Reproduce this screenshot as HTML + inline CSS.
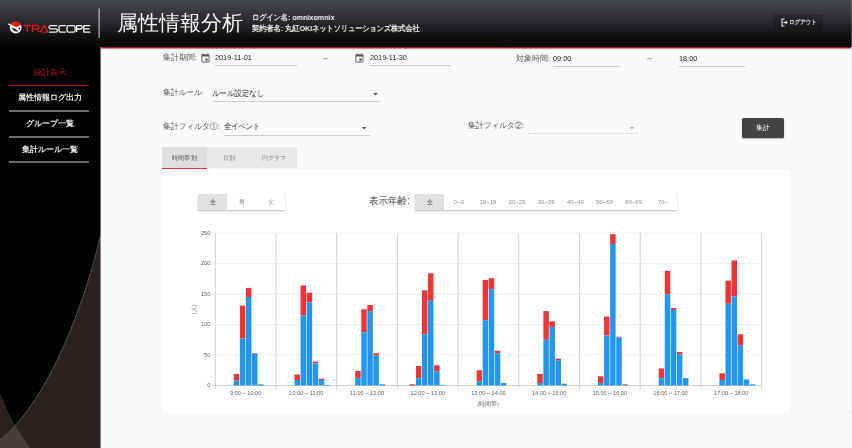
<!DOCTYPE html>
<html><head><meta charset="utf-8">
<style>
*{margin:0;padding:0;box-sizing:border-box}
html,body{width:852px;height:448px;overflow:hidden;background:#fafafa;font-family:"Liberation Sans",sans-serif}
.a{position:absolute;white-space:nowrap;will-change:transform}
#hdr{position:absolute;left:0;top:0;width:852px;height:47px;background:linear-gradient(#45484d 0%,#2a2b2f 45%,#0c0c0d 82%,#030303 100%)}
#redl{position:absolute;left:100px;top:47px;width:751px;height:1px;background:#a0181e}
#redl2{position:absolute;left:100px;top:48px;width:751px;height:1px;background:#ee7c84}
#side{position:absolute;left:0;top:47px;width:101px;height:401px;background:#000;overflow:hidden}
.menu{will-change:transform;position:absolute;left:0;width:100px;text-align:center;font-size:8px;line-height:10px;color:#e8e8e8;font-weight:bold}
.mline{position:absolute;left:9px;width:80px;height:2px;background:#6b6b6b}
.lbl{font-size:7.5px;line-height:10px;color:#555}
.val{font-size:7.3px;line-height:10px;color:#262626}
.valj{font-size:7px;line-height:10px;color:#3a3a3a;letter-spacing:0.3px}
.ul{position:absolute;height:1px;background:#cdcdcd}
.tab{position:absolute;top:147.4px;height:21px;width:45px;text-align:center;font-size:6.3px;letter-spacing:0.2px;line-height:21.5px;color:#7e7e7e;background:#e8e8e8;will-change:transform}
.tg{will-change:transform;position:absolute;height:16px;background:#fff;box-shadow:0 1px 1.5px rgba(0,0,0,.28)}
.tb{position:absolute;top:0;height:16px;width:29.15px;text-align:center;font-size:6px;line-height:16px;color:#909090}
.yl{font-size:5.6px;fill:#666;font-family:"Liberation Sans",sans-serif}
.xl{font-size:5.6px;fill:#666;font-family:"Liberation Sans",sans-serif}
</style></head><body>
<div id="hdr"></div>
<div id="redl"></div><div id="redl2"></div>

<!-- logo -->
<svg class="a" style="left:0;top:0" width="100" height="47" viewBox="0 0 100 47">
  <circle cx="15.7" cy="27.6" r="5.9" fill="#f4f4f4"/>
  <path d="M10.2 24.9 A6.05 6.05 0 0 1 21.3 24.8 L15.8 27.4 Z" fill="#e5141c"/>
  <path d="M8.2 23.9 L15.8 27.6" stroke="#f4f4f4" stroke-width="1.4" fill="none"/>
  <path d="M11.3 27.7 Q15 27.9 18.5 31.2 Q14.2 32.2 11.3 27.7 Z" fill="#121212"/>
  <circle cx="19.4" cy="28.5" r="0.95" fill="#121212"/>
  <g fill="none" stroke-width="1.35" stroke-linejoin="round">
  <path stroke="#e5141c" d="M23.9 25.5 H30.9 M27.4 25.5 V32.1 M32.5 32.1 V25.5 H37.3 Q38.9 25.5 38.9 27.2 Q38.9 28.9 37.3 28.9 H33 M36.6 28.9 L39.1 32.1 M40.4 32.1 L44.2 25.4 L48 32.1 H42.6"/>
  <path stroke="#f0f0f0" d="M57.3 25.6 H50.6 Q49 25.6 49 27.2 Q49 28.8 50.6 28.8 H55.8 Q57.4 28.8 57.4 30.45 Q57.4 32.1 55.8 32.1 H49 M65.8 25.6 H60.6 Q59 25.6 59 27.2 V30.5 Q59 32.1 60.6 32.1 H65.8 M68.6 25.6 H73.5 Q75.1 25.6 75.1 27.2 V30.5 Q75.1 32.1 73.5 32.1 H68.6 Q67 32.1 67 30.5 V27.2 Q67 25.6 68.6 25.6 Z M76.7 32.1 V25.6 H80.6 Q82.2 25.6 82.2 27.3 Q82.2 29 80.6 29 H76.7 M90.4 25.6 H83.8 V32.1 H90.4 M83.8 28.85 H89.6"/>
  </g>
  <rect x="98.6" y="8.5" width="1" height="29.5" fill="#d8d8d8"/>
</svg>
<div class="a" style="left:117px;top:10px;font-size:21px;line-height:26px;color:#f4f4f4">属性情報分析</div>
<div class="a" style="left:252px;top:12.3px;font-size:8px;line-height:11px;color:#f4f4f4;font-weight:bold;transform:scaleX(0.897);transform-origin:0 0">ログイン名: omnixomnix<br>契約者名: 丸紅OKIネットソリューションズ株式会社</div>
<!-- logout -->
<div class="a" style="left:773px;top:14.3px;width:50.4px;height:16.4px;background:rgba(0,0,0,.18);border-radius:1px"></div>
<svg class="a" style="left:780.8px;top:18px" width="8" height="9" viewBox="0 0 8 9">
  <path d="M3.5 1 H1 V8 H3.5" stroke="#eee" stroke-width="1.1" fill="none"/>
  <path d="M2.5 4.5 H5" stroke="#eee" stroke-width="1.2"/><path d="M4.6 2.6 L6.9 4.5 L4.6 6.4 Z" fill="#eee"/>
</svg>
<div class="a" style="left:789.3px;top:18px;font-size:6.2px;line-height:8px;color:#f0f0f0;font-weight:bold;transform:scaleX(0.92);transform-origin:0 0">ログアウト</div>

<!-- sidebar -->
<div id="side">
  <svg class="a" style="left:0;top:0" width="101" height="401" viewBox="0 47 101 401">
    <path d="M101 232 L100 237 C87.3 293.8 51 399.3 0 440 L0 448 L101 448 Z" fill="#2b2120"/>
    <path d="M0 393 Q13 427 30 448 L0 448 Z" fill="#2b2120"/>
    <path d="M15.5 425.6 Q22 437 30 448 L0 448 L0 440 Q8 433 15.5 425.6 Z" fill="#463e3d"/>
    <path d="M100 237 C87.3 293.8 51 399.3 0 440" stroke="#6a6464" stroke-width="0.7" fill="none"/>
  </svg>
  <div class="menu" style="top:20.5px;color:#cc1018;font-weight:normal">統計表示</div>
  <div class="mline" style="top:38px;height:1px;background:#b40e16"></div>
  <div class="menu" style="top:46px">属性情報ログ出力</div>
  <div class="mline" style="top:63px"></div>
  <div class="menu" style="top:71.8px">グループ一覧</div>
  <div class="mline" style="top:88.5px"></div>
  <div class="menu" style="top:98px">集計ルール一覧</div>
  <div class="mline" style="top:114px"></div>
</div>
<div class="a" style="left:100px;top:47px;width:1px;height:401px;background:rgba(250,250,250,.45)"></div>
<div class="a" style="left:851px;top:0;width:1px;height:47px;background:linear-gradient(#6a6c70,#3a3a3a)"></div><div class="a" style="left:851px;top:47px;width:1px;height:367px;background:#f0f0f0"></div>

<!-- form row 1 -->
<div class="a lbl" style="left:162.8px;top:53px">集計期間:</div>
<svg class="a" style="left:200.1px;top:52.6px" width="10.8" height="10.8" viewBox="0 0 24 24"><path d="M17 12h-5v5h5v-5zM16 1v2H8V1H6v2H5c-1.11 0-1.99.9-1.99 2L3 19c0 1.1.89 2 2 2h14c1.1 0 2-.9 2-2V5c0-1.1-.9-2-2-2h-1V1h-2zm3 18H5V8h14v11z" fill="#5c5c5c"/></svg>
<div class="a val" style="left:215px;top:53px">2019-11-01</div>
<div class="ul" style="left:215px;top:65px;width:82px"></div>
<svg class="a" style="left:323px;top:56.9px" width="5" height="3.4" viewBox="0 0 6 4"><path d="M0.4 2.7 Q1.6 0.9 3 2 Q4.4 3.1 5.6 1.3" stroke="#666" stroke-width="0.9" fill="none"/></svg>
<svg class="a" style="left:354.3px;top:52.6px" width="10.8" height="10.8" viewBox="0 0 24 24"><path d="M17 12h-5v5h5v-5zM16 1v2H8V1H6v2H5c-1.11 0-1.99.9-1.99 2L3 19c0 1.1.89 2 2 2h14c1.1 0 2-.9 2-2V5c0-1.1-.9-2-2-2h-1V1h-2zm3 18H5V8h14v11z" fill="#5c5c5c"/></svg>
<div class="a val" style="left:370px;top:53px">2019-11-30</div>
<div class="ul" style="left:370px;top:65px;width:81.3px"></div>
<div class="a lbl" style="left:515.5px;top:53.5px">対象時間:</div>
<div class="a val" style="left:553.4px;top:53.5px">09:00</div>
<div class="ul" style="left:553.4px;top:66px;width:66.6px"></div>
<svg class="a" style="left:646.8px;top:57.1px" width="5" height="3.4" viewBox="0 0 6 4"><path d="M0.4 2.7 Q1.6 0.9 3 2 Q4.4 3.1 5.6 1.3" stroke="#666" stroke-width="0.9" fill="none"/></svg>
<div class="a val" style="left:678.8px;top:53.5px">18:00</div>
<div class="ul" style="left:678.8px;top:66px;width:66.7px"></div>

<!-- form row 2 -->
<div class="a lbl" style="left:162.8px;top:88px;transform:scaleX(0.97);transform-origin:0 0">集計ルール:</div>
<div class="a val" style="left:212.2px;top:88.8px;font-size:8px;transform:scaleX(0.93);transform-origin:0 0">ルール設定なし</div>
<svg class="a" style="left:372.5px;top:92.5px" width="5" height="3" viewBox="0 0 5 3"><path d="M0 0 H5 L2.5 2.6 Z" fill="#555"/></svg>
<div class="ul" style="left:212.7px;top:100.5px;width:167.1px"></div>

<!-- form row 3 -->
<div class="a lbl" style="left:162.9px;top:121.7px;transform:scaleX(0.975);transform-origin:0 0">集計フィルタ①:</div>
<div class="a val" style="left:223.6px;top:122px;font-size:8px;transform:scaleX(0.9);transform-origin:0 0">全イベント</div>
<svg class="a" style="left:362.3px;top:126.8px" width="5" height="3" viewBox="0 0 5 3"><path d="M0 0 H4.4 L2.2 2.4 Z" fill="#555"/></svg>
<div class="ul" style="left:223.8px;top:134.8px;width:146.4px"></div>
<div class="a lbl" style="left:467.5px;top:121px;transform:scaleX(0.975);transform-origin:0 0">集計フィルタ②:</div>
<svg class="a" style="left:629.5px;top:126.5px" width="5" height="3" viewBox="0 0 5 3"><path d="M0 0 H4 L2 2.2 Z" fill="#aaa"/></svg>
<div class="ul" style="left:528px;top:132.5px;width:109.7px;background:none;border-top:1px dotted #cfcfcf"></div>
<div class="a" style="left:742.3px;top:118px;width:42px;height:20px;background:#434343;border-radius:1.5px;box-shadow:0 1px 1.5px rgba(0,0,0,.3);color:#fff;font-size:7px;line-height:20px;text-align:center">集計</div>

<!-- tabs -->
<div class="tab" style="left:162px;background:#dedede;color:#505050">時間帯別</div>
<div class="a" style="left:162px;top:167.6px;width:45px;height:1.2px;background:#e0303a"></div>
<div class="tab" style="left:207px">日別</div>
<div class="tab" style="left:252px;width:44.5px">円グラフ</div>

<!-- card -->
<div class="a" style="left:162px;top:168.5px;width:628px;height:245px;background:#fff;box-shadow:0 0 1px rgba(0,0,0,.12)"></div>

<!-- gender toggle -->
<div class="tg" style="left:198px;top:194px;width:87.4px">
  <div class="tb" style="left:0;background:#e0e0e0;color:#3a3a3a">全</div>
  <div class="tb" style="left:29.15px">男</div>
  <div class="tb" style="left:58.3px">女</div>
</div>
<div class="a" style="left:368.6px;top:195px;font-size:10px;line-height:12px;color:#3c3c3c;transform:scaleX(0.95);transform-origin:0 0">表示年齢:</div>
<div class="tg" style="left:415.4px;top:194.2px;width:262.3px">
  <div class="tb" style="left:0;background:#e0e0e0;color:#3a3a3a">全</div>
  <div class="tb" style="left:29.15px">0~9</div>
  <div class="tb" style="left:58.3px">10~19</div>
  <div class="tb" style="left:87.45px">20~29</div>
  <div class="tb" style="left:116.6px">30~39</div>
  <div class="tb" style="left:145.75px">40~49</div>
  <div class="tb" style="left:174.9px">50~59</div>
  <div class="tb" style="left:204.05px">60~69</div>
  <div class="tb" style="left:233.2px">70~</div>
</div>

<!-- chart -->
<svg class="a" style="left:0;top:0" width="852" height="448" viewBox="0 0 852 448">
<line x1="211.30" y1="385.50" x2="761.60" y2="385.50" stroke="#c9c9c9" stroke-width="0.8"/>
<text x="210.30" y="387.40" text-anchor="end" class="yl">0</text>
<line x1="211.30" y1="355.00" x2="761.60" y2="355.00" stroke="#ececec" stroke-width="0.8"/>
<text x="210.30" y="356.90" text-anchor="end" class="yl">50</text>
<line x1="211.30" y1="324.50" x2="761.60" y2="324.50" stroke="#ececec" stroke-width="0.8"/>
<text x="210.30" y="326.40" text-anchor="end" class="yl">100</text>
<line x1="211.30" y1="294.00" x2="761.60" y2="294.00" stroke="#ececec" stroke-width="0.8"/>
<text x="210.30" y="295.90" text-anchor="end" class="yl">150</text>
<line x1="211.30" y1="263.50" x2="761.60" y2="263.50" stroke="#ececec" stroke-width="0.8"/>
<text x="210.30" y="265.40" text-anchor="end" class="yl">200</text>
<line x1="211.30" y1="233.00" x2="761.60" y2="233.00" stroke="#ececec" stroke-width="0.8"/>
<text x="210.30" y="234.90" text-anchor="end" class="yl">250</text>
<line x1="215.30" y1="233.00" x2="215.30" y2="389.50" stroke="#cdcdcd" stroke-width="0.9"/>
<line x1="276.00" y1="233.00" x2="276.00" y2="389.50" stroke="#cdcdcd" stroke-width="0.9"/>
<line x1="336.70" y1="233.00" x2="336.70" y2="389.50" stroke="#cdcdcd" stroke-width="0.9"/>
<line x1="397.40" y1="233.00" x2="397.40" y2="389.50" stroke="#cdcdcd" stroke-width="0.9"/>
<line x1="458.10" y1="233.00" x2="458.10" y2="389.50" stroke="#cdcdcd" stroke-width="0.9"/>
<line x1="518.80" y1="233.00" x2="518.80" y2="389.50" stroke="#cdcdcd" stroke-width="0.9"/>
<line x1="579.50" y1="233.00" x2="579.50" y2="389.50" stroke="#cdcdcd" stroke-width="0.9"/>
<line x1="640.20" y1="233.00" x2="640.20" y2="389.50" stroke="#cdcdcd" stroke-width="0.9"/>
<line x1="700.90" y1="233.00" x2="700.90" y2="389.50" stroke="#cdcdcd" stroke-width="0.9"/>
<line x1="761.60" y1="233.00" x2="761.60" y2="389.50" stroke="#cdcdcd" stroke-width="0.9"/>
<text x="245.65" y="395.00" text-anchor="middle" class="xl">9:00 ~ 10:00</text>
<text x="306.35" y="395.00" text-anchor="middle" class="xl">10:00 ~ 11:00</text>
<text x="367.05" y="395.00" text-anchor="middle" class="xl">11:00 ~ 12:00</text>
<text x="427.75" y="395.00" text-anchor="middle" class="xl">12:00 ~ 13:00</text>
<text x="488.45" y="395.00" text-anchor="middle" class="xl">13:00 ~ 14:00</text>
<text x="549.15" y="395.00" text-anchor="middle" class="xl">14:00 ~ 15:00</text>
<text x="609.85" y="395.00" text-anchor="middle" class="xl">15:00 ~ 16:00</text>
<text x="670.55" y="395.00" text-anchor="middle" class="xl">16:00 ~ 17:00</text>
<text x="731.25" y="395.00" text-anchor="middle" class="xl">17:00 ~ 18:00</text>
<rect x="233.81" y="373.91" width="5.46" height="6.71" fill="#ef3434"/>
<rect x="233.81" y="380.62" width="5.46" height="4.88" fill="#2196f3"/>
<rect x="239.88" y="305.59" width="5.46" height="32.94" fill="#ef3434"/>
<rect x="239.88" y="338.53" width="5.46" height="46.97" fill="#2196f3"/>
<rect x="245.95" y="287.90" width="5.46" height="9.15" fill="#ef3434"/>
<rect x="245.95" y="297.05" width="5.46" height="88.45" fill="#2196f3"/>
<rect x="252.02" y="353.17" width="5.46" height="0.61" fill="#ef3434"/>
<rect x="252.02" y="353.78" width="5.46" height="31.72" fill="#2196f3"/>
<rect x="258.09" y="384.28" width="5.46" height="1.22" fill="#2196f3"/>
<rect x="294.51" y="374.52" width="5.46" height="5.49" fill="#ef3434"/>
<rect x="294.51" y="380.01" width="5.46" height="5.49" fill="#2196f3"/>
<rect x="300.58" y="285.46" width="5.46" height="29.89" fill="#ef3434"/>
<rect x="300.58" y="315.35" width="5.46" height="70.15" fill="#2196f3"/>
<rect x="306.65" y="292.78" width="5.46" height="9.76" fill="#ef3434"/>
<rect x="306.65" y="302.54" width="5.46" height="82.96" fill="#2196f3"/>
<rect x="312.72" y="361.71" width="5.46" height="1.83" fill="#ef3434"/>
<rect x="312.72" y="363.54" width="5.46" height="21.96" fill="#2196f3"/>
<rect x="318.79" y="378.79" width="5.46" height="1.22" fill="#ef3434"/>
<rect x="318.79" y="380.01" width="5.46" height="5.49" fill="#2196f3"/>
<rect x="324.86" y="384.89" width="5.46" height="0.61" fill="#2196f3"/>
<rect x="355.21" y="370.86" width="5.46" height="7.32" fill="#ef3434"/>
<rect x="355.21" y="378.18" width="5.46" height="7.32" fill="#2196f3"/>
<rect x="361.28" y="309.25" width="5.46" height="23.18" fill="#ef3434"/>
<rect x="361.28" y="332.43" width="5.46" height="53.07" fill="#2196f3"/>
<rect x="367.35" y="304.98" width="5.46" height="6.10" fill="#ef3434"/>
<rect x="367.35" y="311.08" width="5.46" height="74.42" fill="#2196f3"/>
<rect x="373.42" y="353.17" width="5.46" height="2.44" fill="#ef3434"/>
<rect x="373.42" y="355.61" width="5.46" height="29.89" fill="#2196f3"/>
<rect x="379.49" y="384.28" width="5.46" height="1.22" fill="#2196f3"/>
<rect x="409.84" y="384.28" width="5.46" height="1.22" fill="#ef3434"/>
<rect x="415.91" y="365.98" width="5.46" height="12.20" fill="#ef3434"/>
<rect x="415.91" y="378.18" width="5.46" height="7.32" fill="#2196f3"/>
<rect x="421.98" y="290.34" width="5.46" height="43.92" fill="#ef3434"/>
<rect x="421.98" y="334.26" width="5.46" height="51.24" fill="#2196f3"/>
<rect x="428.05" y="273.26" width="5.46" height="27.45" fill="#ef3434"/>
<rect x="428.05" y="300.71" width="5.46" height="84.79" fill="#2196f3"/>
<rect x="434.12" y="365.37" width="5.46" height="6.10" fill="#ef3434"/>
<rect x="434.12" y="371.47" width="5.46" height="14.03" fill="#2196f3"/>
<rect x="440.19" y="384.89" width="5.46" height="0.61" fill="#2196f3"/>
<rect x="476.61" y="370.25" width="5.46" height="10.98" fill="#ef3434"/>
<rect x="476.61" y="381.23" width="5.46" height="4.27" fill="#2196f3"/>
<rect x="482.68" y="279.97" width="5.46" height="40.26" fill="#ef3434"/>
<rect x="482.68" y="320.23" width="5.46" height="65.27" fill="#2196f3"/>
<rect x="488.75" y="278.14" width="5.46" height="10.98" fill="#ef3434"/>
<rect x="488.75" y="289.12" width="5.46" height="96.38" fill="#2196f3"/>
<rect x="494.82" y="350.73" width="5.46" height="2.44" fill="#ef3434"/>
<rect x="494.82" y="353.17" width="5.46" height="32.33" fill="#2196f3"/>
<rect x="500.89" y="383.06" width="5.46" height="2.44" fill="#2196f3"/>
<rect x="537.31" y="373.91" width="5.46" height="9.15" fill="#ef3434"/>
<rect x="537.31" y="383.06" width="5.46" height="2.44" fill="#2196f3"/>
<rect x="543.38" y="311.08" width="5.46" height="28.67" fill="#ef3434"/>
<rect x="543.38" y="339.75" width="5.46" height="45.75" fill="#2196f3"/>
<rect x="549.45" y="321.45" width="5.46" height="5.49" fill="#ef3434"/>
<rect x="549.45" y="326.94" width="5.46" height="58.56" fill="#2196f3"/>
<rect x="555.52" y="358.66" width="5.46" height="1.83" fill="#ef3434"/>
<rect x="555.52" y="360.49" width="5.46" height="25.01" fill="#2196f3"/>
<rect x="561.59" y="383.67" width="5.46" height="1.83" fill="#2196f3"/>
<rect x="598.01" y="376.35" width="5.46" height="6.71" fill="#ef3434"/>
<rect x="598.01" y="383.06" width="5.46" height="2.44" fill="#2196f3"/>
<rect x="604.08" y="316.57" width="5.46" height="18.91" fill="#ef3434"/>
<rect x="604.08" y="335.48" width="5.46" height="50.02" fill="#2196f3"/>
<rect x="610.15" y="234.22" width="5.46" height="9.76" fill="#ef3434"/>
<rect x="610.15" y="243.98" width="5.46" height="141.52" fill="#2196f3"/>
<rect x="616.22" y="336.70" width="5.46" height="0.61" fill="#ef3434"/>
<rect x="616.22" y="337.31" width="5.46" height="48.19" fill="#2196f3"/>
<rect x="622.29" y="384.28" width="5.46" height="0.61" fill="#ef3434"/>
<rect x="622.29" y="384.89" width="5.46" height="0.61" fill="#2196f3"/>
<rect x="658.71" y="368.42" width="5.46" height="9.76" fill="#ef3434"/>
<rect x="658.71" y="378.18" width="5.46" height="7.32" fill="#2196f3"/>
<rect x="664.78" y="270.82" width="5.46" height="23.79" fill="#ef3434"/>
<rect x="664.78" y="294.61" width="5.46" height="90.89" fill="#2196f3"/>
<rect x="670.85" y="308.03" width="5.46" height="1.83" fill="#ef3434"/>
<rect x="670.85" y="309.86" width="5.46" height="75.64" fill="#2196f3"/>
<rect x="676.92" y="351.95" width="5.46" height="2.44" fill="#ef3434"/>
<rect x="676.92" y="354.39" width="5.46" height="31.11" fill="#2196f3"/>
<rect x="682.99" y="378.18" width="5.46" height="7.32" fill="#2196f3"/>
<rect x="719.41" y="373.30" width="5.46" height="6.71" fill="#ef3434"/>
<rect x="719.41" y="380.01" width="5.46" height="5.49" fill="#2196f3"/>
<rect x="725.48" y="280.58" width="5.46" height="23.18" fill="#ef3434"/>
<rect x="725.48" y="303.76" width="5.46" height="81.74" fill="#2196f3"/>
<rect x="731.55" y="260.45" width="5.46" height="35.99" fill="#ef3434"/>
<rect x="731.55" y="296.44" width="5.46" height="89.06" fill="#2196f3"/>
<rect x="737.62" y="334.26" width="5.46" height="10.98" fill="#ef3434"/>
<rect x="737.62" y="345.24" width="5.46" height="40.26" fill="#2196f3"/>
<rect x="743.69" y="379.40" width="5.46" height="6.10" fill="#2196f3"/>
<rect x="749.76" y="384.28" width="5.46" height="1.22" fill="#2196f3"/>
<text x="488" y="406" text-anchor="middle" class="xl">(時間帯)</text>
<text x="0" y="0" transform="translate(195.5 309.3) rotate(-90)" text-anchor="middle" class="xl" style="fill:#888">(人)</text>
</svg>
</body></html>
